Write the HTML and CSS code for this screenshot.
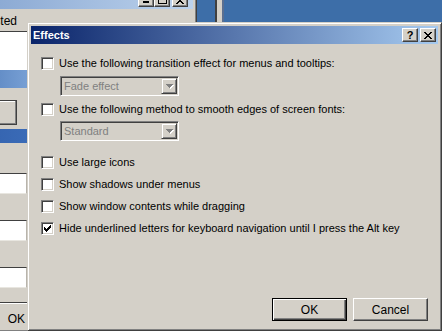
FILE: index.html
```html
<!doctype html>
<html lang="en">
<head>
	<meta charset="UTF-8">
	<title>Effects</title>
	<link rel="stylesheet" href="styles.css">
</head>
<body>
	<div class="desk">
		<!-- window behind the dialog -->
		<div class="edge"></div>
		<div class="bgwin">
			<div class="bgwin-title">
				<span class="cap"><svg width="6" height="2" viewBox="0 0 6 2"><path d="M0 0h6v2H0z"/></svg></span>
				<span class="cap cap-max"><svg width="9" height="9" viewBox="0 0 9 9"><path d="M0 0h9v2H0z M0 2h1v7H0z M8 2h1v7H8z M0 8h9v1H0z"/></svg></span>
				<span class="cap cap-close"><svg width="8" height="7" viewBox="0 0 8 7"><path d="M0 0h2v1H0z M6 0h2v1H6z M1 1h2v1H1z M5 1h2v1H5z M2 2h4v1H2z M3 3h2v1H3z M2 4h4v1H2z M1 5h2v1H1z M5 5h2v1H5z M0 6h2v1H0z M6 6h2v1H6z"/></svg></span>
			</div>
			<div class="bgwin-body">
				<div class="tab"><span>Selected</span></div>
				<div class="listbox"></div>
				<div class="listsel"></div>
				<div class="stubbtn"></div>
				<div class="bluebar"></div>
				<div class="field"></div>
				<div class="field"></div>
				<div class="field field-last"></div>
				<div class="rule"></div>
				<div class="okstub">OK</div>
			</div>
		</div>

		<!-- Effects dialog -->
		<div class="dialog">
			<div class="titlebar">
				<span class="title">Effects</span>
				<span class="tbtn tbtn-help">?</span>
				<span class="tbtn tbtn-close"><svg width="8" height="7" viewBox="0 0 8 7"><path d="M0 0h2v1H0z M6 0h2v1H6z M1 1h2v1H1z M5 1h2v1H5z M2 2h4v1H2z M3 3h2v1H3z M2 4h4v1H2z M1 5h2v1H1z M5 5h2v1H5z M0 6h2v1H0z M6 6h2v1H6z"/></svg></span>
			</div>
			<div class="client">
				<div class="opt">
					<span class="chk"></span>
					<span class="lbl">Use the following transition effect for menus and tooltips:</span>
				</div>
				<div class="combo">
					<span class="combo-text">Fade effect</span>
					<span class="combo-btn"><svg width="8" height="5" viewBox="0 0 8 5"><path fill="#fff" d="M1 1h7v1H1z M2 2h5v1H2z M3 3h3v1H3z M4 4h1v1H4z"/><path fill="#808080" d="M0 0h7v1H0z M1 1h5v1H1z M2 2h3v1H2z M3 3h1v1H3z"/></svg></span>
				</div>
				<div class="opt opt-after-combo">
					<span class="chk"></span>
					<span class="lbl">Use the following method to smooth edges of screen fonts:</span>
				</div>
				<div class="combo combo-second">
					<span class="combo-text">Standard</span>
					<span class="combo-btn"><svg width="8" height="5" viewBox="0 0 8 5"><path fill="#fff" d="M1 1h7v1H1z M2 2h5v1H2z M3 3h3v1H3z M4 4h1v1H4z"/><path fill="#808080" d="M0 0h7v1H0z M1 1h5v1H1z M2 2h3v1H2z M3 3h1v1H3z"/></svg></span>
				</div>
				<div class="opt opt-group">
					<span class="chk"></span>
					<span class="lbl">Use large icons</span>
				</div>
				<div class="opt opt-next">
					<span class="chk"></span>
					<span class="lbl">Show shadows under menus</span>
				</div>
				<div class="opt opt-next">
					<span class="chk"></span>
					<span class="lbl">Show window contents while dragging</span>
				</div>
				<div class="opt opt-next">
					<span class="chk"><svg width="7" height="7" viewBox="0 0 7 7"><path d="M6 0h1v1H6z M5 1h2v1H5z M0 2h1v1H0z M4 2h3v1H4z M0 3h2v1H0z M3 3h3v1H3z M0 4h5v1H0z M1 5h3v1H1z M2 6h1v1H2z"/></svg></span>
					<span class="lbl">Hide underlined letters for keyboard navigation until I press the Alt key</span>
				</div>
				<div class="buttons">
					<span class="btn btn-default">OK</span>
					<span class="btn">Cancel</span>
				</div>
			</div>
		</div>
	</div>
</body>
</html>
```

FILE: styles.css
```css
*{
	margin:0;
	padding:0;
	box-sizing:border-box;
}

body{
	font-family:"Liberation Sans", Arial, sans-serif;
	font-size:11px;
	color:#000;
	background:#3d6ea8;
}

svg{
	display:block;
	shape-rendering:crispEdges;
}

.desk{
	position:relative;
	width:442px;
	height:331px;
	overflow:hidden;
	background:#3d6ea8;
}

/* thin frame of another window in the top strip */
.edge{
	position:absolute;
	left:215px;
	top:0;
	width:9px;
	height:22px;
	background:#d4d0c8;
	border-left:2px solid #404040;
	border-right:2px solid #5a6f90;
}

/* ---------- window behind ---------- */
.bgwin{
	position:absolute;
	left:-60px;
	top:-13px;
	width:257px;
	height:345px;
	background:#d4d0c8;
	border:1px solid;
	border-color:#d4d0c8 #404040 #404040 #d4d0c8;
	box-shadow:inset 1px 1px #fff, inset -1px -1px #808080;
	padding:3px;
	display:flex;
	flex-direction:column;
}

.bgwin-title{
	height:18px;
	display:flex;
	align-items:center;
	justify-content:flex-end;
	gap:0;
	padding-right:5px;
	background:linear-gradient(to right, #7f9fcd, #bcd2ec);
}

.cap{
	width:16px;
	height:14px;
	display:flex;
	align-items:flex-end;
	justify-content:center;
	padding-bottom:3px;
	background:#d4d0c8;
	border:1px solid;
	border-color:#fff #404040 #404040 #fff;
	box-shadow:inset -1px -1px #808080;
}

.cap-max{
	padding-bottom:2px;
}

.cap-close{
	margin-left:2px;
	padding-bottom:2px;
}

.bgwin-body{
	flex:1;
	display:flex;
	flex-direction:column;
	align-items:flex-start;
}

.tab{
	width:73px;
	height:22px;
	padding-top:5px;
	display:flex;
	justify-content:flex-end;
	overflow:hidden;
	white-space:nowrap;
	font-size:12px;
}

.listbox{
	width:100%;
	height:39px;
	background:#fff;
	border-top:1px solid #404040;
}

.listsel{
	width:88px;
	height:18px;
	background:linear-gradient(to right, #3f6cae, #7aa2d6);
}

.stubbtn{
	width:73px;
	height:25px;
	margin-top:12px;
	border:1px solid #404040;
	box-shadow:inset -1px -1px #808080, inset 1px 1px #fff;
}

.bluebar{
	width:88px;
	height:14px;
	margin-top:4px;
	background:linear-gradient(to right, #2d5aa6, #3b6cb8);
}

.field{
	width:83px;
	height:21px;
	margin-top:30px;
	background:#fff;
	border-top:1px solid #404040;
	border-right:1px solid #b8b4ac;
	border-bottom:1px solid #e8e6e0;
}

.field + .field{
	margin-top:26px;
}

.field-last{
	margin-top:27px;
}

.rule{
	width:83px;
	height:2px;
	margin-top:14px;
	border-top:1px solid #404040;
	border-bottom:1px solid #fff;
}

.okstub{
	width:81px;
	margin-top:8px;
	text-align:right;
	font-size:12px;
}

/* ---------- dialog ---------- */
.dialog{
	position:absolute;
	left:27px;
	top:22px;
	width:415px;
	height:309px;
	background:#d4d0c8;
	border:1px solid;
	border-color:#d4d0c8 #404040 #404040 #d4d0c8;
	box-shadow:inset 1px 1px #fff, inset -1px -1px #808080;
	padding:3px;
	display:flex;
	flex-direction:column;
}

.titlebar{
	height:18px;
	display:flex;
	align-items:center;
	padding:0 2px 0 2px;
	background:linear-gradient(to right, #0a246a, #a6caf0);
}

.title{
	flex:1;
	color:#fff;
	font-weight:bold;
	font-size:11px;
	line-height:14px;
}

.tbtn{
	width:16px;
	height:14px;
	display:flex;
	align-items:center;
	justify-content:center;
	background:#d4d0c8;
	border:1px solid;
	border-color:#fff #404040 #404040 #fff;
	box-shadow:inset -1px -1px #808080;
	font-weight:bold;
	font-size:11px;
	line-height:12px;
}

.tbtn-close{
	margin-left:2px;
}

.client{
	flex:1;
	display:flex;
	flex-direction:column;
	padding:13px 10px 6px 10px;
}

.opt{
	display:flex;
	align-items:center;
	height:13px;
	white-space:nowrap;
}

.opt-after-combo{
	margin-top:7px;
}

.opt-group{
	margin-top:15px;
}

.opt-next{
	margin-top:9px;
}

.chk{
	width:13px;
	height:13px;
	flex:none;
	background:#fff;
	border:1px solid;
	border-color:#808080 #fff #fff #808080;
	box-shadow:inset 1px 1px #404040, inset -1px -1px #d4d0c8;
	padding:2px 0 0 2px;
}

.lbl{
	margin-left:5px;
	line-height:13px;
}

.combo{
	width:119px;
	height:20px;
	margin:6px 0 0 19px;
	display:flex;
	align-items:center;
	background:#d4d0c8;
	border:1px solid;
	border-color:#808080 #fff #fff #808080;
	box-shadow:inset 1px 1px #404040, inset -1px -1px #d4d0c8;
	padding:1px;
}

.combo-second{
	margin-top:5px;
}

.combo-text{
	flex:1;
	padding-left:2px;
	color:#808080;
}

.combo-btn{
	width:16px;
	height:16px;
	display:flex;
	align-items:center;
	justify-content:center;
	background:#d4d0c8;
	border:1px solid;
	border-color:#d4d0c8 #404040 #404040 #d4d0c8;
	box-shadow:inset 1px 1px #fff, inset -1px -1px #808080;
	padding:1px 0 0 1px;
}

.buttons{
	margin-top:auto;
	display:flex;
	justify-content:flex-end;
	gap:6px;
}

.btn{
	width:75px;
	height:23px;
	display:flex;
	align-items:center;
	justify-content:center;
	background:#d4d0c8;
	border:1px solid;
	border-color:#fff #404040 #404040 #fff;
	box-shadow:inset -1px -1px #808080;
	font-size:12px;
}

.btn-default{
	border-color:#000;
	box-shadow:inset 1px 1px #fff, inset -1px -1px #404040, inset -2px -2px #808080;
}
```
